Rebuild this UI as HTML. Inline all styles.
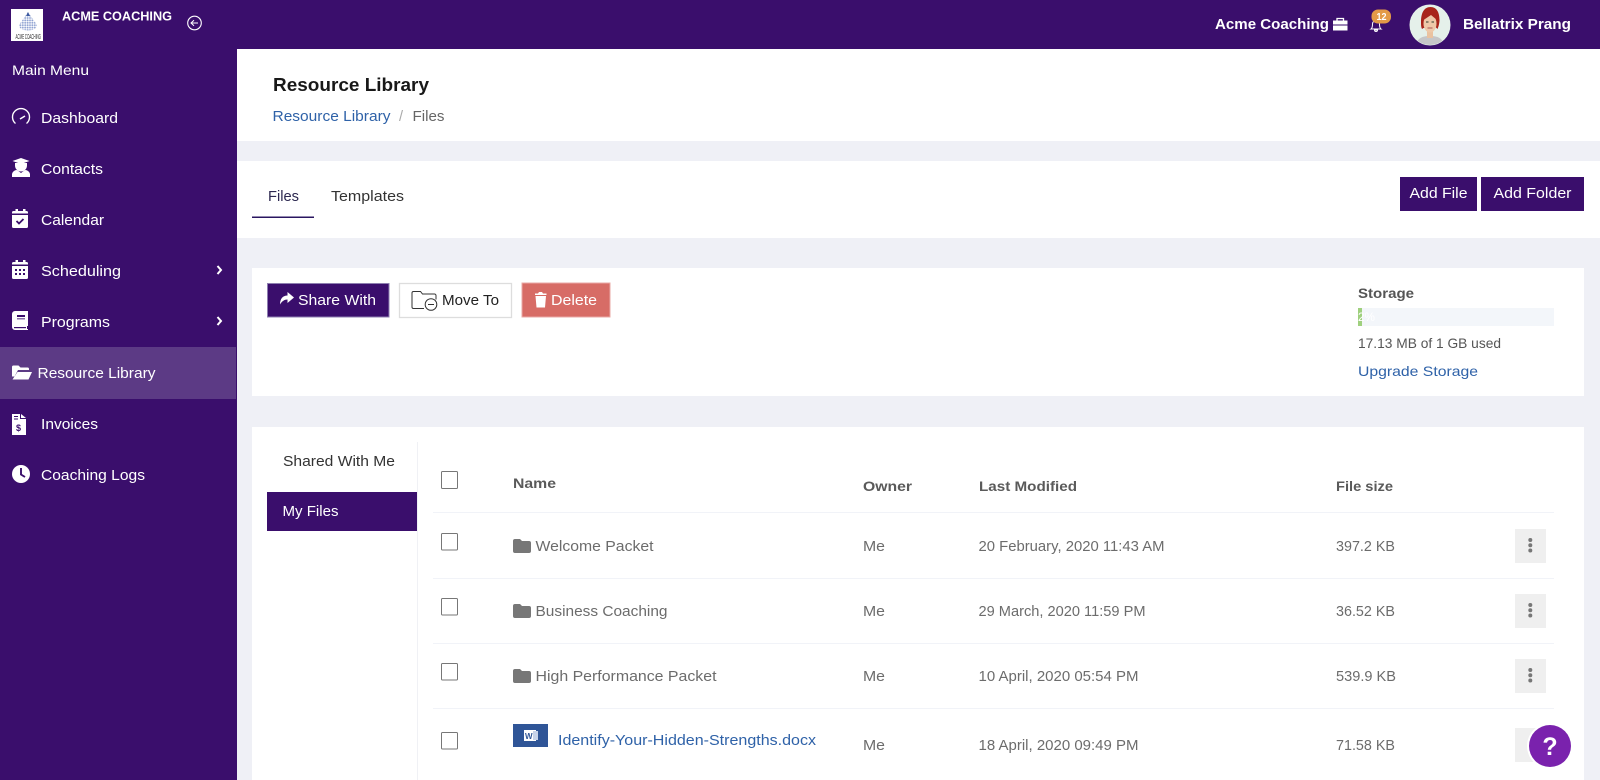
<!DOCTYPE html>
<html><head><meta charset="utf-8"><title>Resource Library</title>
<style>
html,body{margin:0;padding:0;width:1600px;height:780px;overflow:hidden;background:#eff0f6}
svg{display:block}
text{font-family:"Liberation Sans","DejaVu Sans",sans-serif;font-size:14.500px;fill:#666}
.w{fill:#fff}
.b{font-weight:700}
.h{font-weight:700;fill:#5a5a5a;font-size:14px}
.t{fill:#6c6c6c;font-size:14.500px}
.l{fill:#2f62a8}
.d{fill:#222}
</style></head><body>
<svg width="1600" height="780" viewBox="0 0 1600 780" xmlns="http://www.w3.org/2000/svg">
<defs>
<pattern id="dots" width="2.400" height="2.400" patternUnits="userSpaceOnUse"><circle cx="1.200" cy="1.200" r="0.950" fill="#8fa2d2"/></pattern>
<clipPath id="av"><circle cx="1430" cy="25" r="20"/></clipPath>
</defs>
<rect width="1600" height="780" fill="#eff0f6"/>
<!-- top + sidebar -->
<rect width="1600" height="49" fill="#3a0e6c"/>
<rect width="237" height="780" fill="#3a0e6c"/>
<rect x="0" y="347" width="236" height="52" fill="#5c3a85"/>
<!-- logo -->
<rect x="11" y="9" width="32" height="32" fill="#fff"/>
<path d="M28 12 37 25Q37 30 28 30.500 19 30 19 25Z" fill="url(#dots)"/>
<path d="M28 12 30 16H26Z" fill="#3d5aa0"/>
<text x="15.500" y="39" textLength="25.500" lengthAdjust="spacingAndGlyphs" style="font-size:7px;fill:#333">ACME COACHING</text>
<text x="62" y="20.500" textLength="110" lengthAdjust="spacingAndGlyphs" class="w b" style="font-size:12.500px">ACME COACHING</text>
<circle cx="194.500" cy="23" r="6.800" fill="none" stroke="#fff" stroke-width="1.100"/>
<path d="M198 23h-7m3-2.800-3 2.800 3 2.800" fill="none" stroke="#fff" stroke-width="1"/>
<text x="12" y="75" textLength="77" lengthAdjust="spacingAndGlyphs" class="w" style="font-size:14px">Main Menu</text>
<!-- menu icons -->
<path d="M15.500 123.500A8.500 8.500 0 1 1 26.500 123.500" fill="none" stroke="#fff" stroke-width="1.400"/><path d="M20 119l5-3" stroke="#fff" stroke-width="1.500"/>
<path d="M12.500 161l8.500-3 8.500 3-8.500 3zM15 163h12v2.500a6 6 0 0 1-12 0z" fill="#fff"/><path d="M12 177v-3a5 5 0 0 1 5-4l4 3 4-3a5 5 0 0 1 5 4v3z" fill="#fff"/>
<path d="M12 213.500v-1a1.500 1.500 0 0 1 1.500-1.500h2v-2h2.500v2h5v-2h2.500v2h1a1.500 1.500 0 0 1 1.500 1.500v1zM12 215h16v11.500a1.500 1.500 0 0 1-1.500 1.500h-13a1.500 1.500 0 0 1-1.500-1.500z" fill="#fff"/><path d="M16.500 221l2.500 2.500 4.500-4.500" fill="none" stroke="#3a0e6c" stroke-width="1.800"/>
<path d="M12 264.500v-1a1.500 1.500 0 0 1 1.500-1.500h2v-2h2.500v2h5v-2h2.500v2h1a1.500 1.500 0 0 1 1.500 1.500v1zM12 266h16v11.500a1.500 1.500 0 0 1-1.500 1.500h-13a1.500 1.500 0 0 1-1.500-1.500z" fill="#fff"/><path d="M15 269h2v2h-2zM19 269h2v2h-2zM23 269h2v2h-2zM15 273h2v2h-2zM19 273h2v2h-2zM23 273h2v2h-2z" fill="#3a0e6c"/>
<path d="M15 311h13v15h-1v3h1v1H15a3 3 0 0 1-3-3V314a3 3 0 0 1 3-3z" fill="#fff"/><path d="M17 315h8v2h-8z" fill="#3a0e6c"/><path d="M17 318h8v1.500h-8z" fill="#8a72a8"/><path d="M14 327h12v1.200H14z" fill="#3a0e6c"/>
<path d="M12 370v-3a1.500 1.500 0 0 1 1.500-1.500h5l2 2h7a1.500 1.500 0 0 1 1.500 1.500v1H18l-3.500 6.500-2.500 0z" fill="#fff"/><path d="M17.500 372H32l-3.500 7.500H12.500z" fill="#fff"/>
<path d="M12 414h8v5h6v16H12z" fill="#fff"/><path d="M21 414l5 4h-5z" fill="#fff"/><path d="M14 416h4v1h-4zM14 418.500h4v1h-4z" fill="#3a0e6c"/><text x="16" y="431" style="font-size:9px;fill:#3a0e6c;font-weight:700">$</text>
<circle cx="21" cy="474" r="9" fill="#fff"/><path d="M21 468v6.500l4 2.500" fill="none" stroke="#3a0e6c" stroke-width="1.900"/>
<!-- menu text -->
<text x="41" y="123" textLength="77" lengthAdjust="spacingAndGlyphs" class="w">Dashboard</text>
<text x="41" y="174" textLength="62" lengthAdjust="spacingAndGlyphs" class="w">Contacts</text>
<text x="41" y="225" textLength="63" lengthAdjust="spacingAndGlyphs" class="w">Calendar</text>
<text x="41" y="276" textLength="80" lengthAdjust="spacingAndGlyphs" class="w">Scheduling</text>
<text x="41" y="327" textLength="69" lengthAdjust="spacingAndGlyphs" class="w">Programs</text>
<text x="37.500" y="378" textLength="118" lengthAdjust="spacingAndGlyphs" class="w">Resource Library</text>
<text x="41" y="429" textLength="57" lengthAdjust="spacingAndGlyphs" class="w">Invoices</text>
<text x="41" y="480" textLength="104" lengthAdjust="spacingAndGlyphs" class="w">Coaching Logs</text>
<path d="M217.500 266l3.500 4-3.500 4M217.500 317l3.500 4-3.500 4" fill="none" stroke="#fff" stroke-width="2"/>
<!-- top right -->
<text x="1215" y="29" textLength="114" lengthAdjust="spacingAndGlyphs" class="w b" style="font-size:14.500px">Acme Coaching</text>
<path d="M1333 20.500h14.500v4h-14.500zM1333 25.500h14.500v5h-14.500z" fill="#fff"/><path d="M1337 20.500v-2h6.500v2" fill="none" stroke="#fff" stroke-width="1.300"/>
<path d="M1371 29c1.500-1 1.500-3 1.500-5a3.500 3.500 0 0 1 7 0c0 2 0 4 1.500 5zM1374.500 30h3a1.500 1.500 0 0 1-3 0z" fill="none" stroke="#fff" stroke-width="1"/>
<rect x="1371.500" y="9.500" width="19.500" height="14" rx="6.500" fill="#e39a48"/>
<text x="1376.500" y="20" textLength="10" lengthAdjust="spacingAndGlyphs" class="w b" style="font-size:10px">12</text>
<!-- avatar -->
<circle cx="1430" cy="25" r="20.500" fill="#e5f0ea"/>
<g clip-path="url(#av)">
<path d="M1416 46c1-9 8-10 14-10s13 1 14 10z" fill="#c6c6c8"/>
<rect x="1427" y="29" width="6" height="9" fill="#eac2a0"/>
<path d="M1421 22c0-9 3-15 9.500-15s9 6 9 13c0 3-1 7-2 9l-2-2-12 1-1.500 1c-1-2-1-4-1-7z" fill="#a8241a"/>
<ellipse cx="1430" cy="23.500" rx="6.500" ry="9" fill="#eec8a8"/>
<path d="M1423.500 20c1-5 4-8 7.500-8s5.500 3 6 8l-6-5z" fill="#a8241a"/>
<path d="M1426 22h2.500M1431.500 22h2.500" stroke="#554" stroke-width="1.300"/><path d="M1427.500 28h5" stroke="#a55" stroke-width="1"/>
</g>
<text x="1463" y="29" textLength="108" lengthAdjust="spacingAndGlyphs" class="w b" style="font-size:14.500px">Bellatrix Prang</text>
<!-- header -->
<rect x="237" y="49" width="1363" height="92" fill="#fff"/>
<text x="273" y="91" textLength="156" lengthAdjust="spacingAndGlyphs" class="b" style="font-size:18.500px;fill:#181818">Resource Library</text>
<text x="272.500" y="121" textLength="118" lengthAdjust="spacingAndGlyphs" class="l">Resource Library</text>
<text x="399" y="121" style="fill:#aaa">/</text>
<text x="412.500" y="121" textLength="32" lengthAdjust="spacingAndGlyphs">Files</text>
<!-- tabs -->
<rect x="237" y="161" width="1363" height="77" fill="#fff"/>
<text x="268" y="201" textLength="31" lengthAdjust="spacingAndGlyphs" style="fill:#2c2850">Files</text>
<text x="331" y="201" textLength="73" lengthAdjust="spacingAndGlyphs" style="fill:#333">Templates</text>
<rect x="252" y="216.500" width="62" height="1.500" fill="#2a1660"/>
<rect x="1400" y="177" width="77" height="34" fill="#3a0e6c"/>
<rect x="1481" y="177" width="103" height="34" fill="#3a0e6c"/>
<text x="1409.500" y="198" textLength="58" lengthAdjust="spacingAndGlyphs" class="w">Add File</text>
<text x="1493.500" y="198" textLength="78" lengthAdjust="spacingAndGlyphs" class="w">Add Folder</text>
<!-- action panel -->
<rect x="252" y="268" width="1332" height="128" fill="#fff"/>
<rect x="267.500" y="283.500" width="121.500" height="33.500" fill="#3a0e6c" stroke="#8e7fb0" stroke-width="1"/>
<path d="M280 304.500c0-6 3-9 7.500-9V292l6.500 5.500-6.500 5.500v-3.500c-3 0-5.500 1.500-7.500 5z" fill="#fff"/>
<text x="298" y="305" textLength="78" lengthAdjust="spacingAndGlyphs" class="w">Share With</text>
<rect x="399.500" y="283.500" width="112" height="34" fill="#fff" stroke="#ddd" stroke-width="1.300"/>
<path d="M424 308.500h-10.500a1.500 1.500 0 0 1-1.500-1.500v-14a1.500 1.500 0 0 1 1.500-1.500h7l2 2.500h12a1.500 1.500 0 0 1 1.500 1.500v4" fill="none" stroke="#333" stroke-width="1"/>
<circle cx="431" cy="304.500" r="5.800" fill="#fff" stroke="#333" stroke-width="1"/><path d="M428 304.500h6" stroke="#333"/>
<text x="442" y="305" textLength="57" lengthAdjust="spacingAndGlyphs" class="d">Move To</text>
<rect x="522" y="283" width="88" height="34" fill="#d76c66" stroke="#eaa9a5" stroke-width="1"/>
<path d="M535.500 296h10.500l-1 11.500h-8.500zM535 293.500h3l1-1.500h3l1 1.500h3.500v1.500H535z" fill="#fff"/>
<text x="551" y="305" textLength="46" lengthAdjust="spacingAndGlyphs" class="w">Delete</text>
<text x="1358" y="298" textLength="56" lengthAdjust="spacingAndGlyphs" class="b" style="font-size:14px;fill:#555">Storage</text>
<rect x="1358" y="308" width="196" height="18" fill="#f3f6fa"/>
<rect x="1358" y="308" width="4" height="18" fill="#9fd07e"/>
<text x="1358" y="321" textLength="17" lengthAdjust="spacingAndGlyphs" class="w" style="font-size:12px">2%</text>
<text x="1358" y="348" textLength="143" lengthAdjust="spacingAndGlyphs" style="font-size:14px;fill:#555">17.13 MB of 1 GB used</text>
<text x="1358" y="376" textLength="120" lengthAdjust="spacingAndGlyphs" class="l" style="font-size:14px">Upgrade Storage</text>
<!-- table panel -->
<rect x="252" y="427" width="1332" height="353" fill="#fff"/>
<rect x="417" y="442" width="1" height="338" fill="#f0f1f5"/>
<text x="283" y="466" textLength="112" lengthAdjust="spacingAndGlyphs" style="fill:#333">Shared With Me</text>
<rect x="267" y="492" width="150" height="39" fill="#3a0e6c"/>
<text x="282.500" y="516" textLength="56" lengthAdjust="spacingAndGlyphs" class="w">My Files</text>
<rect x="441.500" y="471.500" width="16" height="17" rx="1" fill="#fff" stroke="#777"/>
<text x="513" y="488" textLength="43" lengthAdjust="spacingAndGlyphs" class="h">Name</text>
<text x="863" y="491" textLength="49" lengthAdjust="spacingAndGlyphs" class="h">Owner</text>
<text x="979" y="491" textLength="98" lengthAdjust="spacingAndGlyphs" class="h">Last Modified</text>
<text x="1336" y="491" textLength="57" lengthAdjust="spacingAndGlyphs" class="h">File size</text>
<g fill="#f1f3f8">
<rect x="433" y="512" width="1121" height="1"/><rect x="433" y="578" width="1121" height="1"/><rect x="433" y="643" width="1121" height="1"/><rect x="433" y="708" width="1121" height="1"/>
</g>
<g fill="#fff" stroke="#777">
<rect x="441.500" y="533.500" width="16" height="16.500" rx="1"/><rect x="441.500" y="598.500" width="16" height="16.500" rx="1"/><rect x="441.500" y="663.500" width="16" height="16.500" rx="1"/><rect x="441.500" y="732.500" width="16" height="16.500" rx="1"/>
</g>
<g fill="#777">
<path d="M513 541a2 2 0 0 1 2-2h5l2 2h7a2 2 0 0 1 2 2v8a2 2 0 0 1-2 2h-14a2 2 0 0 1-2-2z"/>
<path d="M513 606a2 2 0 0 1 2-2h5l2 2h7a2 2 0 0 1 2 2v8a2 2 0 0 1-2 2h-14a2 2 0 0 1-2-2z"/>
<path d="M513 671a2 2 0 0 1 2-2h5l2 2h7a2 2 0 0 1 2 2v8a2 2 0 0 1-2 2h-14a2 2 0 0 1-2-2z"/>
</g>
<text x="535.500" y="551" textLength="118" lengthAdjust="spacingAndGlyphs" class="t">Welcome Packet</text>
<text x="535.500" y="616" textLength="132" lengthAdjust="spacingAndGlyphs" class="t">Business Coaching</text>
<text x="535.500" y="681" textLength="181" lengthAdjust="spacingAndGlyphs" class="t">High Performance Packet</text>
<rect x="513" y="724" width="35" height="23" fill="#2f5597"/>
<rect x="524" y="730" width="12" height="11" fill="#fff"/><rect x="533" y="731" width="5" height="9" fill="#c7d3ea"/>
<text x="525" y="739" style="font-size:8px;fill:#2f5597;font-weight:700">W</text>
<text x="558" y="745" textLength="258" lengthAdjust="spacingAndGlyphs" class="l">Identify-Your-Hidden-Strengths.docx</text>
<text x="863" y="551" textLength="22" lengthAdjust="spacingAndGlyphs" class="t">Me</text>
<text x="863" y="616" textLength="22" lengthAdjust="spacingAndGlyphs" class="t">Me</text>
<text x="863" y="681" textLength="22" lengthAdjust="spacingAndGlyphs" class="t">Me</text>
<text x="863" y="750" textLength="22" lengthAdjust="spacingAndGlyphs" class="t">Me</text>
<text x="978.500" y="551" textLength="186" lengthAdjust="spacingAndGlyphs" class="t">20 February, 2020 11:43 AM</text>
<text x="978.500" y="616" textLength="167" lengthAdjust="spacingAndGlyphs" class="t">29 March, 2020 11:59 PM</text>
<text x="978.500" y="681" textLength="160" lengthAdjust="spacingAndGlyphs" class="t">10 April, 2020 05:54 PM</text>
<text x="978.500" y="750" textLength="160" lengthAdjust="spacingAndGlyphs" class="t">18 April, 2020 09:49 PM</text>
<text x="1336" y="551" textLength="59" lengthAdjust="spacingAndGlyphs" class="t">397.2 KB</text>
<text x="1336" y="616" textLength="59" lengthAdjust="spacingAndGlyphs" class="t">36.52 KB</text>
<text x="1336" y="681" textLength="60" lengthAdjust="spacingAndGlyphs" class="t">539.9 KB</text>
<text x="1336" y="750" textLength="59" lengthAdjust="spacingAndGlyphs" class="t">71.58 KB</text>
<g fill="#efefef">
<rect x="1515" y="529" width="31" height="34"/><rect x="1515" y="594" width="31" height="34"/><rect x="1515" y="659" width="31" height="34"/><rect x="1515" y="728" width="31" height="34"/>
</g>
<g fill="#777">
<circle cx="1530.300" cy="540" r="2"/><circle cx="1530.300" cy="545.300" r="2"/><circle cx="1530.300" cy="550.500" r="2"/>
<circle cx="1530.300" cy="605" r="2"/><circle cx="1530.300" cy="610.300" r="2"/><circle cx="1530.300" cy="615.500" r="2"/>
<circle cx="1530.300" cy="670" r="2"/><circle cx="1530.300" cy="675.300" r="2"/><circle cx="1530.300" cy="680.500" r="2"/>
</g>
<circle cx="1550" cy="746" r="23" fill="#fff"/>
<circle cx="1550" cy="746" r="21" fill="#7a22ad"/>
<text x="1550" y="755" text-anchor="middle" class="w b" style="font-size:25px">?</text>
</svg>
</body></html>
